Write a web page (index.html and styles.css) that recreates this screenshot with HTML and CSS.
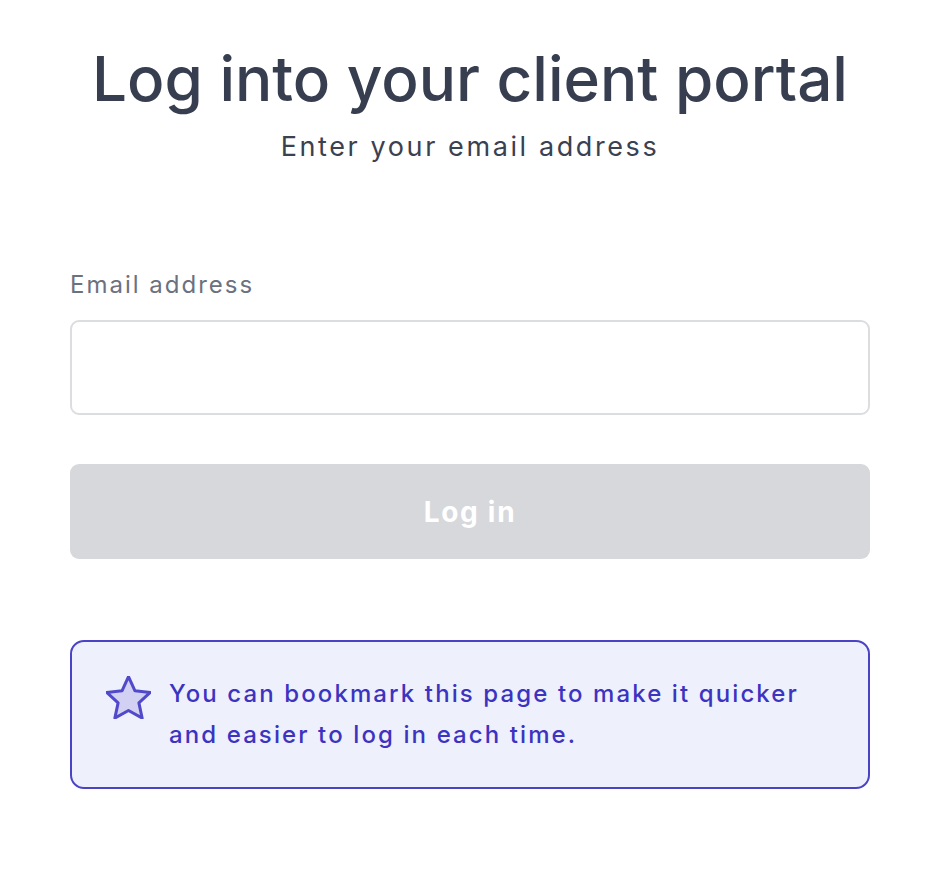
FILE: index.html
```html
<!DOCTYPE html>
<html>
<head>
<meta charset="utf-8">
<link rel="stylesheet" href="styles.css">
</head>
<body>
<main class="page">
  <header class="intro">
    <h1 class="title">Log into your client portal</h1>
    <p class="subtitle">Enter your email address</p>
  </header>
  <form class="form">
    <label class="label" for="email">Email address</label>
    <input class="input" id="email" type="email">
    <button class="button" type="button">Log in</button>
  </form>
  <div class="notice">
    <svg class="star" viewBox="2.3 2.3 19.4 18.6" width="45" height="43" aria-hidden="true">
      <path d="M12 2.6l2.8 6.1 6.6.7-4.9 4.5 1.4 6.6L12 17.2l-5.9 3.3 1.4-6.6-4.9-4.5 6.6-.7z" fill="#d2d1f3" stroke="#5049c9" stroke-width="1.3" stroke-linejoin="round"/>
    </svg>
    <p class="notice-text">You can bookmark this page to make it quicker and easier to log in each time.</p>
  </div>
</main>
</body>
</html>
```
FILE: styles.css
```css
* { box-sizing: border-box; }
html, body { margin: 0; padding: 0; background: #fff; }
body { font-family: Inter, "Noto Sans", sans-serif; }
.page {
  width: 800px;
  margin: 0 0 0 70px;
  padding-top: 42px;
}
.intro { text-align: center; }
.title {
  margin: 0;
  font-size: 62px;
  line-height: 74px;
  font-weight: 500;
  color: #373e4f;
  letter-spacing: 0;
}
.subtitle {
  margin: 13px 0 0;
  font-size: 27px;
  line-height: 36px;
  font-weight: 400;
  color: #3a4151;
  letter-spacing: 2.6px;
}
.form {
  display: flex;
  flex-direction: column;
  margin-top: 105px;
}
.label {
  font-size: 24px;
  line-height: 30px;
  color: #6b7180;
  letter-spacing: 2px;
  margin-bottom: 20px;
}
.input {
  height: 95px;
  border: 2px solid #dcdde1;
  border-radius: 9px;
  background: #fff;
  font: inherit;
  font-size: 24px;
  padding: 0 20px;
}
.button {
  margin-top: 49px;
  height: 95px;
  border: none;
  border-radius: 9px;
  background: #d7d8dc;
  color: #fff;
  font-family: inherit;
  font-size: 28px;
  font-weight: 700;
  letter-spacing: 1.7px;
}
.notice {
  margin-top: 81px;
  display: flex;
  gap: 18px;
  align-items: flex-start;
  padding: 31px 24px 32px 34px;
  border: 2px solid #4b43c6;
  border-radius: 14px;
  background: #eef0fc;
}
.star { flex: none; margin-top: 3px; }
.notice-text {
  margin: 0;
  font-size: 24px;
  line-height: 41px;
  color: #3c34c0;
  font-weight: 500;
  letter-spacing: 2.1px;
}
```
